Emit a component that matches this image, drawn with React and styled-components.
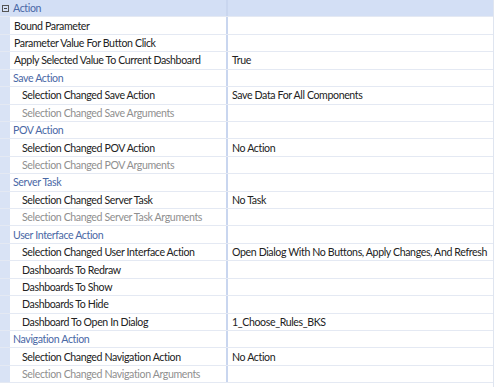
import React from "react";
import styled, { createGlobalStyle } from "styled-components";

const gutterBlue = "#d9e3f5";
const headerBlue = "#d3dff5";
const lineColor = "#e4e9f3";
const categoryText = "#4a68a6";

const GlobalStyle = createGlobalStyle`
  html, body {
    margin: 0;
    padding: 0;
    background: #ffffff;
  }
  body {
    font-family: Lato, "Open Sans", sans-serif;
  }
`;

const Grid = styled.div`
  width: 494px;
  height: 387px;
  overflow: hidden;
  display: flex;
  flex-direction: column;
  background: #ffffff;
  border-right: 1px solid #dfe5f0;
  box-sizing: border-box;
`;

const Row = styled.div`
  display: grid;
  grid-template-columns: 226px 2px 1fr;
  height: 17.43px;
  flex: none;
  box-sizing: border-box;
  border-bottom: 1px solid ${lineColor};
  background: ${(p) => (p.$header ? headerBlue : "#ffffff")};
  font-size: 10.6px;
  letter-spacing: -0.38px;
  line-height: 16px;
`;

const NameCell = styled.div`
  display: flex;
  align-items: center;
  background: ${(p) => (p.$header ? headerBlue : `linear-gradient(to right, ${gutterBlue} 0 10px, #fff 10px)`)};
  padding-left: ${(p) => p.$indent}px;
  color: ${(p) => (p.$category ? categoryText : p.$disabled ? "#8f8f8f" : "#222222")};
  white-space: nowrap;
  overflow: hidden;
`;

const Divider = styled.div`
  background: #c9d6ef;
`;

const ValueCell = styled.div`
  display: flex;
  align-items: center;
  padding-left: 4px;
  color: #222222;
  white-space: nowrap;
  overflow: hidden;
`;

const Toggle = styled.span`
  width: 7px;
  height: 7px;
  border: 1px solid #555;
  margin-left: 2px;
  margin-right: 4px;
  position: relative;
  box-sizing: border-box;
  flex: none;

  &::after {
    content: "";
    position: absolute;
    left: 1px;
    right: 1px;
    top: 2px;
    height: 1px;
    background: #444;
  }
`;

const rows = [
  { name: "Bound Parameter", indent: 14 },
  { name: "Parameter Value For Button Click", indent: 14 },
  { name: "Apply Selected Value To Current Dashboard", indent: 14, value: "True" },
  { name: "Save Action", category: true },
  { name: "Selection Changed Save Action", value: "Save Data For All Components" },
  { name: "Selection Changed Save Arguments", disabled: true },
  { name: "POV Action", category: true },
  { name: "Selection Changed POV Action", value: "No Action" },
  { name: "Selection Changed POV Arguments", disabled: true },
  { name: "Server Task", category: true },
  { name: "Selection Changed Server Task", value: "No Task" },
  { name: "Selection Changed Server Task Arguments", disabled: true },
  { name: "User Interface Action", category: true },
  {
    name: "Selection Changed User Interface Action",
    value: "Open Dialog With No Buttons, Apply Changes, And Refresh",
  },
  { name: "Dashboards To Redraw" },
  { name: "Dashboards To Show" },
  { name: "Dashboards To Hide" },
  { name: "Dashboard To Open In Dialog", value: "1_Choose_Rules_BKS" },
  { name: "Navigation Action", category: true },
  { name: "Selection Changed Navigation Action", value: "No Action" },
  { name: "Selection Changed Navigation Arguments", disabled: true },
];

const App = () => {
  return (
    <>
      <GlobalStyle />
      <Grid>
        <Row $header>
          <NameCell $header $category $indent={0}>
            <Toggle />
            Action
          </NameCell>
          <Divider />
          <ValueCell />
        </Row>
        {rows.map((r) => (
          <Row key={r.name}>
            <NameCell
              $indent={r.indent || (r.category ? 13 : 22)}
              $category={r.category}
              $disabled={r.disabled}
            >
              {r.name}
            </NameCell>
            <Divider />
            <ValueCell>{r.value}</ValueCell>
          </Row>
        ))}
      </Grid>
    </>
  );
};

export default App;
